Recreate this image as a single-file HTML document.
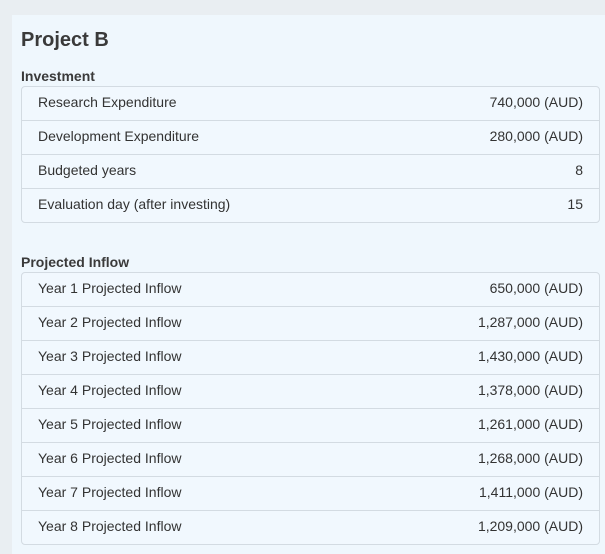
<!DOCTYPE html>
<html><head><style>
body{margin:0;width:605px;height:554px;background:#e9eef2;font-family:"Liberation Sans",Arial,sans-serif;color:#3a3a3a;overflow:hidden;position:relative}
.panel{position:absolute;left:12px;top:15px;width:593px;height:539px;background:#eff7fd}
h1{position:absolute;left:9px;top:14px;margin:0;font-size:20px;font-weight:bold;color:#3a3a3a}
.lbl{position:absolute;left:9px;font-size:14px;font-weight:bold;color:#3a3a3a}
.card{position:absolute;left:9px;width:577px;border:1px solid #d3dbe2;border-radius:4px;background:#f1f8fe}
.row{height:29px;padding:0 16px 4px 16px;border-top:1px solid #d3dbe2;display:flex;justify-content:space-between;align-items:center;font-size:14px;color:#333}
.row:first-child{border-top:none}
</style></head><body>
<div class="panel">
<h1>Project B</h1>
<div class="lbl" style="top:53px">Investment</div>
<div class="card" style="top:71px">
<div class="row"><span>Research Expenditure</span><span>740,000 (AUD)</span></div>
<div class="row"><span>Development Expenditure</span><span>280,000 (AUD)</span></div>
<div class="row"><span>Budgeted years</span><span>8</span></div>
<div class="row"><span>Evaluation day (after investing)</span><span>15</span></div>
</div>
<div class="lbl" style="top:239px">Projected Inflow</div>
<div class="card" style="top:257px">
<div class="row"><span>Year 1 Projected Inflow</span><span>650,000 (AUD)</span></div>
<div class="row"><span>Year 2 Projected Inflow</span><span>1,287,000 (AUD)</span></div>
<div class="row"><span>Year 3 Projected Inflow</span><span>1,430,000 (AUD)</span></div>
<div class="row"><span>Year 4 Projected Inflow</span><span>1,378,000 (AUD)</span></div>
<div class="row"><span>Year 5 Projected Inflow</span><span>1,261,000 (AUD)</span></div>
<div class="row"><span>Year 6 Projected Inflow</span><span>1,268,000 (AUD)</span></div>
<div class="row"><span>Year 7 Projected Inflow</span><span>1,411,000 (AUD)</span></div>
<div class="row"><span>Year 8 Projected Inflow</span><span>1,209,000 (AUD)</span></div>
</div>
</div>
</body></html>
